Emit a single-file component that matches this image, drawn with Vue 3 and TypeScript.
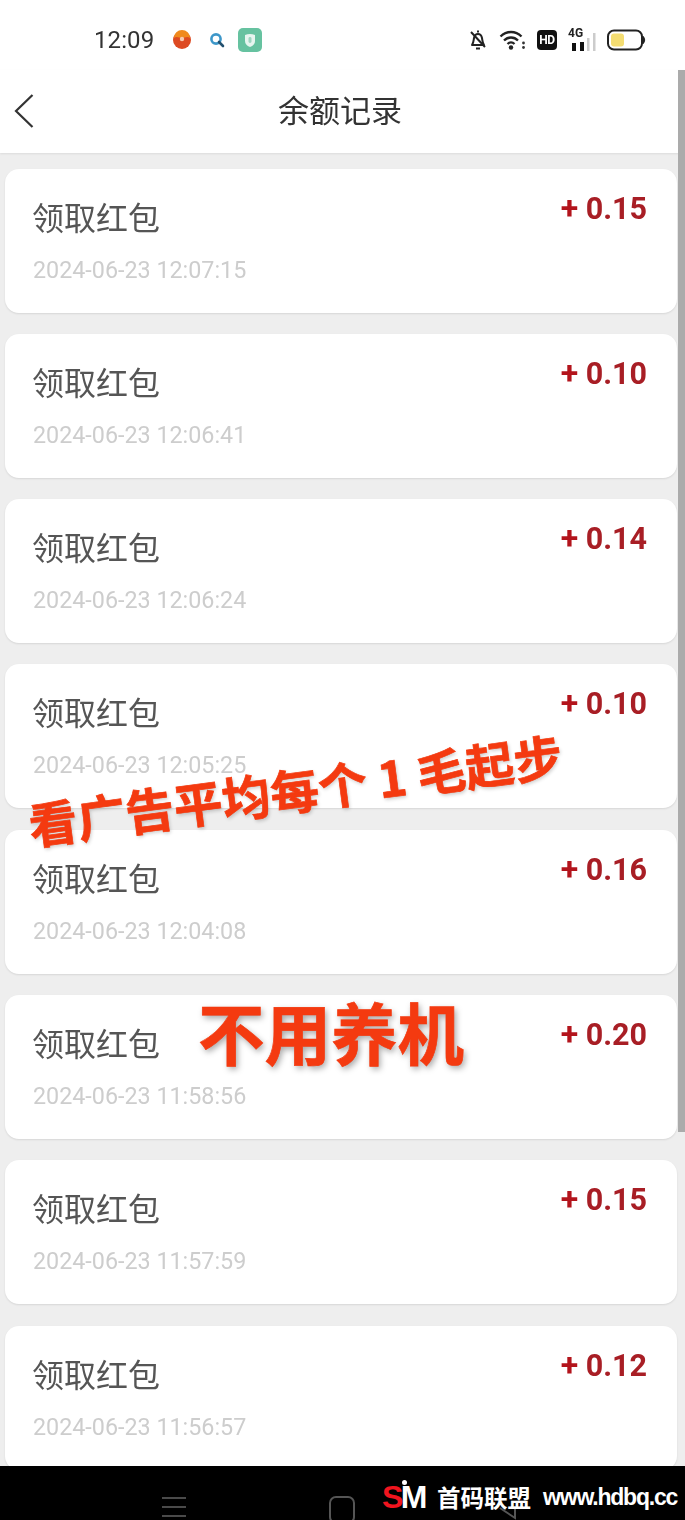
<script setup lang="ts">
interface Rec { time: string; amount: string }
const records: Rec[] = [
  { time: '2024-06-23 12:07:15', amount: '0.15' },
  { time: '2024-06-23 12:06:41', amount: '0.10' },
  { time: '2024-06-23 12:06:24', amount: '0.14' },
  { time: '2024-06-23 12:05:25', amount: '0.10' },
  { time: '2024-06-23 12:04:08', amount: '0.16' },
  { time: '2024-06-23 11:58:56', amount: '0.20' },
  { time: '2024-06-23 11:57:59', amount: '0.15' },
  { time: '2024-06-23 11:56:57', amount: '0.12' },
]
</script>

<template>
  <div class="phone">
    <div class="status">
      <div class="status-left">
        <span class="clock">12:09</span>
        <svg class="ic-app" width="20" height="20" viewBox="0 0 20 20">
          <circle cx="10" cy="10" r="9" fill="#dd4a22" />
          <path d="M2 8a8 8 0 0 1 16 0c-3-2-5 0-8 0s-5-2-8 0z" fill="#f08a1d" />
          <circle cx="10" cy="9" r="2.2" fill="#f6c9b0" />
        </svg>
        <svg class="ic-search" width="16" height="16" viewBox="0 0 16 16">
          <circle cx="7" cy="7" r="4.6" fill="none" stroke="#3d97c9" stroke-width="2.6" />
          <path d="M10 10l4 4" stroke="#22506f" stroke-width="2.6" stroke-linecap="round" />
        </svg>
        <svg class="ic-shield" width="24" height="24" viewBox="0 0 24 24">
          <rect width="24" height="24" rx="5" fill="#66c2a0" />
          <path d="M7 7q5-2 10 0v6q0 4-5 6q-5-2-5-6z" fill="#e6f5ef" />
          <rect x="10.5" y="9" width="3" height="6" rx="1.4" fill="#9ed6c1" />
        </svg>
      </div>
      <div class="status-right">
        <svg width="20" height="24" viewBox="0 0 20 24">
          <path d="M4 17c1.500-2 1.500-4 2-7 .5-2.500 2-4 4-4s3.500 1.500 4 4c.5 3 .5 5 2 7z" fill="none" stroke="#222" stroke-width="2" stroke-linejoin="round" />
          <path d="M8 20.500h4M10 2.500v2M3 4l14 15" stroke="#222" stroke-width="2" />
        </svg>
        <svg class="ic-wifi" width="27" height="22" viewBox="0 0 27 22">
          <path d="M1.500 7.500c6-6 15-6 21 0M5 11.500c4-4 10-4 14 0M8.500 15c2-2 5-2 7 0" fill="none" stroke="#222" stroke-width="2.300" />
          <circle cx="12" cy="18.500" r="2.200" fill="#222" />
          <circle cx="24.500" cy="14" r="1.400" fill="#333" />
          <circle cx="24.500" cy="18.500" r="1.400" fill="#333" />
        </svg>
        <span class="hd">HD</span>
        <div class="signal">
          <span class="four-g">4G</span>
          <svg width="28" height="20" viewBox="0 0 28 20">
            <rect x="4" y="11" width="4" height="8" fill="#111" />
            <rect x="12" y="10" width="4" height="9" fill="#111" />
            <rect x="19" y="6" width="2.500" height="13" fill="#ccc" />
            <rect x="25" y="1" width="2.500" height="18" fill="#ccc" />
          </svg>
        </div>
        <svg class="ic-batt" width="40" height="22" viewBox="0 0 40 22">
          <rect x="1" y="1.500" width="34" height="19" rx="6" fill="#fff" stroke="#222" stroke-width="2" />
          <rect x="4" y="4.500" width="13" height="13" rx="3" fill="#f4dd72" />
          <path d="M36.500 7.500q2.500 3.500 0 7z" fill="#222" stroke="#222" />
        </svg>
      </div>
    </div>

    <header class="bar">
      <svg class="back" width="22" height="36" viewBox="0 0 22 36">
        <path d="M19.500 2L3 18l16.500 16" fill="none" stroke="#333" stroke-width="2.200" />
      </svg>
      <h1 class="title">余额记录</h1>
    </header>

    <main class="list">
      <article v-for="r in records" :key="r.time" class="card">
        <div class="info">
          <div class="name">领取红包</div>
          <div class="time">{{ r.time }}</div>
        </div>
        <div class="amount"><span class="plus">+</span> {{ r.amount }}</div>
      </article>
    </main>

    <footer class="nav">
      <div class="nav-ic burger"><i></i><i></i><i></i></div>
      <div class="nav-ic home"></div>
      <svg class="nav-tri" width="22" height="14" viewBox="0 0 22 14">
        <path d="M2 2l15 10V0" fill="none" stroke="#555" stroke-width="2" />
      </svg>
      <div class="mark">
        <span class="sm"><b>S</b>M<i class="spark"></i></span>
        <span class="cn">首码联盟</span>
        <span class="url">www.hdbq.cc</span>
      </div>
    </footer>

    <div class="scrollbar"></div>
    <div class="promo promo-a">看广告平均每个 1 毛起步</div>
    <div class="promo promo-b">不用养机</div>
  </div>
</template>

<style>
html, body { margin: 0; background: #000; }
</style>

<style scoped>
.phone {
  position: relative;
  width: 685px;
  height: 1520px;
  overflow: hidden;
  display: flex;
  flex-direction: column;
  background: #eee;
  font-family: Roboto, "Noto Sans CJK SC", sans-serif;
}
.status {
  height: 70px;
  flex: none;
  background: #fff;
  display: flex;
  justify-content: space-between;
  align-items: center;
  padding: 10px 38px 0 94px;
  box-sizing: border-box;
  filter: blur(0.5px);
}
.status-left, .status-right { display: flex; align-items: center; }
.clock { font-size: 24px; color: #333; width: 78px; letter-spacing: 0.1px; }
.ic-search { margin-left: 17px; }
.ic-shield { margin-left: 13px; }
.status-right { gap: 11px; }
.hd {
  width: 20px;
  height: 20px;
  background: #111;
  color: #fff;
  border-radius: 4px;
  font-size: 12px;
  font-weight: 700;
  line-height: 20px;
  text-align: center;
  letter-spacing: -0.3px;
}
.signal { position: relative; width: 28px; height: 24px; display: flex; align-items: flex-end; }
.four-g {
  position: absolute;
  left: 0;
  top: -2px;
  font-size: 12px;
  font-weight: 700;
  color: #222;
  line-height: 14px;
}
.bar {
  position: relative;
  height: 83px;
  flex: none;
  box-sizing: border-box;
  padding: 0 5px 7px 0;
  background: #fff;
  box-shadow: 0 1px 2px rgba(0, 0, 0, 0.08);
  display: flex;
  align-items: center;
  justify-content: center;
}
.back { position: absolute; left: 13px; top: 23px; }
.title {
  margin: 0;
  font-family: "Noto Sans CJK SC", sans-serif;
  font-size: 31px;
  font-weight: 400;
  color: #333;
  filter: blur(0.4px);
}
.list {
  flex: 1;
  min-height: 0;
  overflow: hidden;
  padding: 15.600px 8px 0 5px;
  display: flex;
  flex-direction: column;
  gap: 21.300px;
}
.card {
  flex: none;
  height: 144px;
  box-sizing: border-box;
  background: #fff;
  border-radius: 14px;
  box-shadow: 0 1px 2px rgba(0, 0, 0, 0.1);
  display: flex;
  justify-content: space-between;
  padding: 22px 30px 0 28px;
}
.name {
  margin-top: 4px;
  margin-left: -1px;
  font-family: "Noto Sans CJK SC", sans-serif;
  font-size: 32px;
  line-height: 42px;
  color: #555;
  filter: blur(0.4px);
}
.time {
  margin-top: 19px;
  font-size: 23.300px;
  line-height: 28px;
  color: #cdcdcd;
  filter: blur(0.4px);
}
.amount {
  font-size: 30.500px;
  font-weight: 700;
  line-height: 34px;
  color: #a81e25;
  filter: blur(0.3px);
}
.plus { color: #b3141c; font-size: 32px; }
.nav {
  position: relative;
  height: 54px;
  flex: none;
  background: #000;
}
.nav-ic { position: absolute; }
.burger {
  left: 162px;
  top: 31px;
  width: 24px;
  display: flex;
  flex-direction: column;
  gap: 7px;
}
.burger i { display: block; height: 2px; background: #4a4a4a; }
.home {
  left: 329px;
  top: 30px;
  width: 22px;
  height: 24px;
  border: 2px solid #555;
  border-radius: 7px;
}
.nav-tri { position: absolute; left: 498px; top: 40px; }
.mark {
  position: absolute;
  left: 382px;
  top: 14px;
  display: flex;
  align-items: center;
  height: 34px;
  white-space: nowrap;
}
.sm {
  position: relative;
  width: 55px;
  font-family: "Liberation Sans", sans-serif;
  font-size: 32px;
  font-weight: 700;
  letter-spacing: -2.500px;
  color: #fff;
}
.sm b { color: #f0141e; }
.spark {
  position: absolute;
  left: 20px;
  top: 1px;
  width: 5px;
  height: 5px;
  border-radius: 50%;
  background: #fff;
}
.cn {
  font-family: "Noto Sans CJK SC", sans-serif;
  font-size: 23.500px;
  font-weight: 700;
  color: #fff;
  width: 106px;
}
.url {
  font-family: "Liberation Sans", sans-serif;
  font-size: 23px;
  font-weight: 700;
  letter-spacing: -1.200px;
  color: #fff;
}
.scrollbar {
  position: absolute;
  right: 0;
  top: 70px;
  width: 7px;
  height: 1062px;
  background: #ababab;
}
.promo {
  position: absolute;
  font-family: "Noto Sans CJK SC", sans-serif;
  font-weight: 700;
  color: #f43a10;
  white-space: nowrap;
  -webkit-text-stroke: 0.7px #f43a10;
}
.promo-a {
  left: 33px;
  top: 791px;
  font-size: 48.700px;
  line-height: 66px;
  transform: rotate(-7.600deg);
  transform-origin: 0 100%;
  text-shadow: 1px 2px 4px rgba(0, 0, 0, 0.2);
}
.promo-b {
  left: 198px;
  top: 985px;
  font-size: 66.500px;
  line-height: 92px;
  text-shadow: 2px 3px 6px rgba(0, 0, 0, 0.35);
}
</style>
